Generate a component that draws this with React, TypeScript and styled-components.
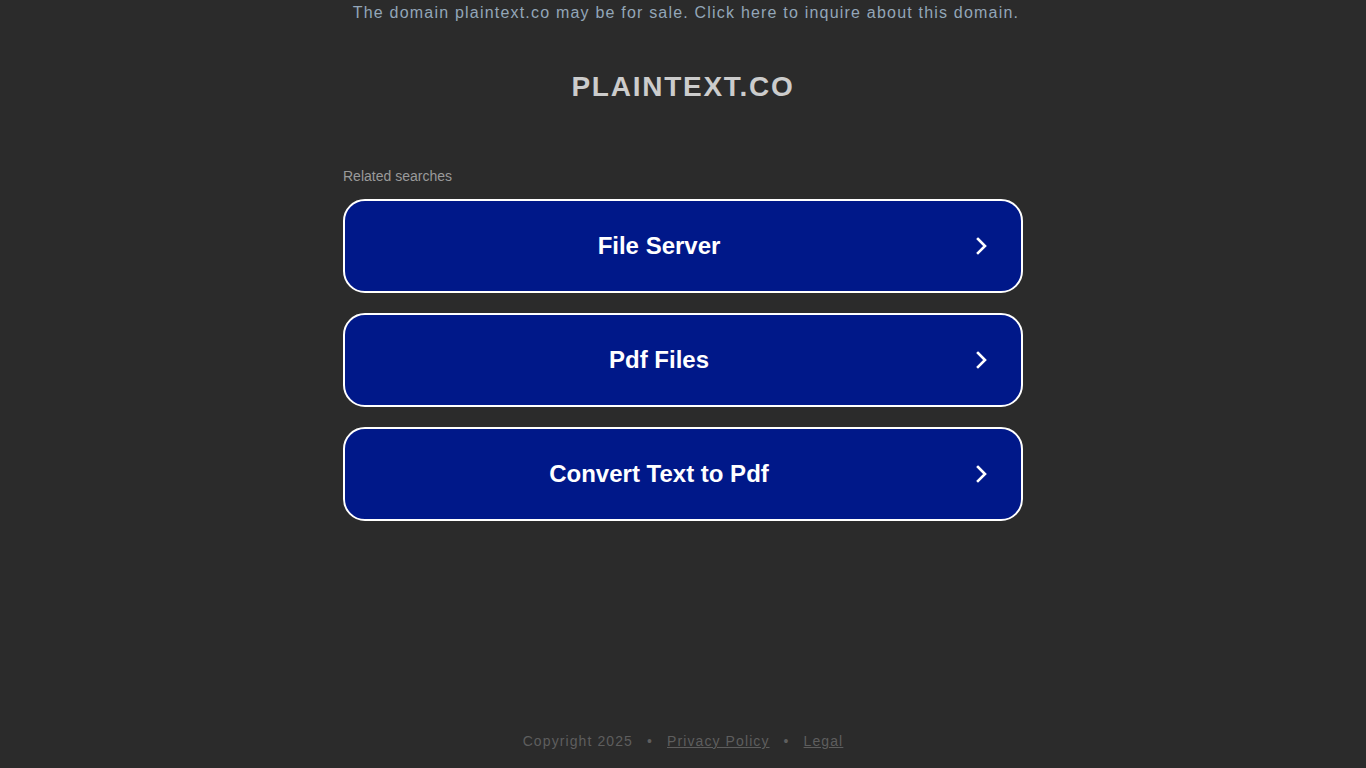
import React from "react";
import styled, { createGlobalStyle } from "styled-components";

const Global = createGlobalStyle`
  html, body { margin: 0; padding: 0; background: #2b2b2b; }
  body { font-family: "Liberation Sans", Arial, sans-serif; }
`;

const Page = styled.div`
  height: 768px;
  display: flex;
  flex-direction: column;
  align-items: center;
  background: #2b2b2b;
`;

const Banner = styled.a`
  margin-top: 3px;
  padding-left: 6px;
  font-size: 16px;
  line-height: 19px;
  letter-spacing: 1.2px;
  color: #93a6b8;
  text-decoration: none;
`;

const Title = styled.h1`
  margin: 49px 0 0;
  font-size: 28px;
  line-height: 32px;
  font-weight: 700;
  letter-spacing: 1.75px;
  color: #cccccc;
`;

const Main = styled.div`
  width: 680px;
  margin-top: 65px;
  display: flex;
  flex-direction: column;
`;

const Label = styled.div`
  font-size: 14px;
  line-height: 17px;
  color: #9a9a9a;
  margin-bottom: 14px;
`;

const List = styled.div`
  display: flex;
  flex-direction: column;
  gap: 20px;
`;

const Item = styled.a`
  box-sizing: border-box;
  height: 94px;
  border: 2px solid #ffffff;
  border-radius: 22px;
  background: #001889;
  display: flex;
  align-items: center;
  padding: 0 30px 0 2px;
  text-decoration: none;
  color: #ffffff;
`;

const ItemText = styled.span`
  flex: 1;
  text-align: center;
  font-size: 24px;
  font-weight: 700;
`;

const Chevron = styled.svg`
  width: 20px;
  height: 20px;
  flex: none;
`;

const Footer = styled.div`
  margin-top: auto;
  margin-bottom: 19px;
  font-size: 14px;
  line-height: 16px;
  letter-spacing: 1.1px;
  color: #5e5e5e;
  display: flex;
  gap: 14px;
`;

const FooterLink = styled.a`
  color: #5e5e5e;
  text-decoration: underline;
`;

const items = ["File Server", "Pdf Files", "Convert Text to Pdf"];

export default function App() {
  return (
    <Page>
      <Global />
      <Banner href="#">The domain plaintext.co may be for sale. Click here to inquire about this domain.</Banner>
      <Title>PLAINTEXT.CO</Title>
      <Main>
        <Label>Related searches</Label>
        <List>
          {items.map((t) => (
            <Item key={t} href="#">
              <ItemText>{t}</ItemText>
              <Chevron viewBox="0 0 20 20" fill="none" stroke="#fff" strokeWidth="2.6" strokeLinecap="square">
                <path d="M7 3 L14 10 L7 17" />
              </Chevron>
            </Item>
          ))}
        </List>
      </Main>
      <Footer>
        <span>Copyright 2025</span>
        <span>•</span>
        <FooterLink href="#">Privacy Policy</FooterLink>
        <span>•</span>
        <FooterLink href="#">Legal</FooterLink>
      </Footer>
    </Page>
  );
}
